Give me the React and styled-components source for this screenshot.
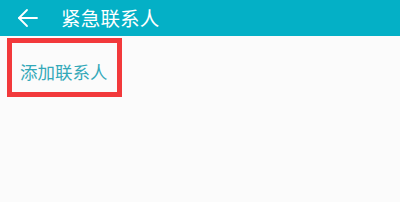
import React from "react";
import styled, { createGlobalStyle } from "styled-components";

const Global = createGlobalStyle`
  html, body { margin: 0; padding: 0; background: #fbfbfb; }
  body { font-family: "Noto Sans CJK SC", "Noto Sans", sans-serif; }
`;

const Page = styled.div`
  width: 400px;
  height: 202px;
  background: #fbfbfb;
  display: flex;
  flex-direction: column;
`;

const Toolbar = styled.header`
  height: 36px;
  background: #04b0c6;
  display: flex;
  align-items: center;
  padding-left: 16px;
  gap: 21px;
  color: #fff;
`;

const Title = styled.h1`
  margin: 0;
  font-size: 19.5px;
  font-weight: 400;
  line-height: 1;
  letter-spacing: 0.2px;
`;

const Content = styled.div`
  padding: 2px 0 0 7px;
`;

const Highlight = styled.div`
  box-sizing: border-box;
  width: 115px;
  height: 59px;
  border: 5px solid #f2393b;
  display: flex;
  align-items: center;
  padding-left: 8px;
  padding-top: 8px;
`;

const AddLink = styled.span`
  color: #34a9b9;
  font-size: 17.5px;
  line-height: 1;
  white-space: nowrap;
`;

const BackIcon = () => (
  <svg width="24" height="24" viewBox="0 0 24 24" fill="none" stroke="#fff" strokeWidth="1.8" strokeLinecap="round" strokeLinejoin="round">
    <path d="M21 12H3" />
    <path d="M11 4l-8 8 8 8" />
  </svg>
);

export default function App() {
  return (
    <Page>
      <Global />
      <Toolbar>
        <BackIcon />
        <Title>紧急联系人</Title>
      </Toolbar>
      <Content>
        <Highlight>
          <AddLink>添加联系人</AddLink>
        </Highlight>
      </Content>
    </Page>
  );
}
